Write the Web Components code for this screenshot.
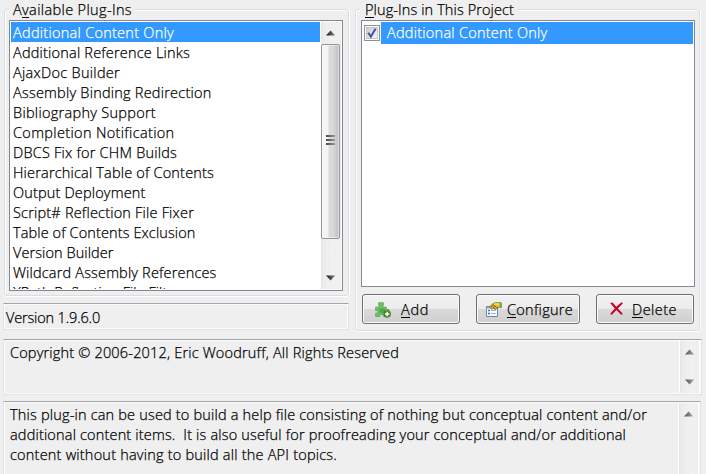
<!DOCTYPE html>
<html lang="en"><head><meta charset="utf-8"><title>Plug-Ins</title>
<style>
html,body{margin:0;background:#efefef;overflow:hidden}
body{width:706px;height:474px;font:350 14.5px/20px "Open Sans","Noto Sans",sans-serif;color:#000;-webkit-text-stroke:.25px}
</style></head><body>
<plugin-page></plugin-page>
<script>
const define=(name,html,init)=>customElements.define(name,class extends HTMLElement{
  connectedCallback(){
    if(this.shadowRoot)return;
    this.attachShadow({mode:'open'}).innerHTML=html;
    if(init)init.call(this,this.shadowRoot);
  }
});

// One line of text, spaced out to the advance width given in "w"
define('ui-text',`<style>:host{display:inline-block;white-space:pre;height:20px;line-height:20px;vertical-align:top}span{display:inline-block}</style><span><slot></slot></span>`,function(r){
  const s=r.querySelector('span'),w=+this.getAttribute('w');
  const n=this.textContent.length;
  if(w)s.style.letterSpacing=((w-s.getBoundingClientRect().width)/n).toFixed(4)+'px';
});

define('ui-group',`<style>
:host{display:block;box-sizing:border-box;border:1px solid #d5dfe5;border-radius:3px;box-shadow:inset 1px 1px #fff,0 1px #fff,1px 0 #fff;padding:0 4px}
.l{display:flex;margin-top:-10px;height:20px}
.l span{background:#efefef;display:flex;padding:0 3px 0 2px}
</style><div class="l"><span><slot name="legend"></slot></span></div><slot></slot>`);

define('ui-list',`<style>
:host{display:flex;box-sizing:border-box;border:1px solid #828790;background:#fff;padding:1px;overflow:hidden}
.rows{flex:1;min-width:0;overflow:hidden}
</style><div class="rows"><slot></slot></div><slot name="bar"></slot>`);

define('ui-item',`<style>
:host{display:block;box-sizing:border-box;height:20px;padding:1px 0 0 2px;overflow:hidden}
:host([selected]){background:#39f;color:#fff}
</style><slot></slot>`);

define('ui-check-item',`<style>
:host{display:flex;height:22px}
.c{box-sizing:border-box;width:16px;height:16px;margin:3px 1px 0 1px;border:1px solid #8e8f8f;background:#fff;padding:1px}
svg{display:block;width:12px;height:12px;background:linear-gradient(135deg,#c5cbd2,#f7f8f9);box-shadow:inset 0 0 0 1px #c0c5ca}
.t{flex:1;background:#39f;color:#fff;padding:1px 0 0 6px}
</style><div class="c"><svg viewBox="0 0 12 12"><path d="M2.3 5.8L4.8 9.7L9.6 1.8" fill="none" stroke="#3f529b" stroke-width="2"/></svg></div><div class="t"><slot></slot></div>`);

const arrow=(up,dim)=>`<svg width="10" height="6" viewBox="0 0 10 6"><defs><linearGradient id="g" x2="1"><stop stop-color="${dim?'#505050':'#101010'}"/><stop offset="1" stop-color="${dim?'#aaa':'#888'}"/></linearGradient></defs><path d="${up?'M0 5.5L4.6 .5L9.2 5.5Z':'M0 .5H9.2L4.6 5.5Z'}" fill="url(#g)"/></svg>`;
define('ui-scroll','',function(r){
  const dim=this.hasAttribute('dim'),thumb=this.hasAttribute('thumb');
  r.innerHTML=`<style>
:host{display:flex;flex-direction:column;box-sizing:border-box;width:20px;background:linear-gradient(90deg,#e3e3e3,#ececec 2px,#f1f1f1 60%,#eee);justify-content:space-between}
:host([dim]){box-shadow:-1px 0 #fff,inset -1px 0 #fff}
.a{height:22px;display:flex;align-items:center;padding-left:5px}
.a svg{display:block}
.th{box-sizing:border-box;width:19px;height:195px;border:1px solid #979797;border-radius:2px;background:linear-gradient(90deg,#f5f5f5 0 6px,#d9dadc 7px 11px,#c9cacd 14px,#bfc0c4);box-shadow:inset 0 0 0 1px #ffffff70;display:flex;flex-direction:column;align-items:center;justify-content:center;gap:2px;padding-bottom:4px}
.th i{width:9px;height:2px;background:linear-gradient(90deg,#444,#999)}
.f{flex:1}
</style><div class="a">${arrow(true,dim)}</div>${thumb?'<div class="th"><i></i><i></i><i></i></div>':''}<div class="f"></div>${this.hasAttribute('cut')?'':`<div class="a">${arrow(false,dim)}</div>`}`;
});

define('ui-field',`<style>
:host{display:flex;box-sizing:border-box;border:1px solid #dfe4ea;border-top-color:#a5a6a9;box-shadow:inset 0 0 0 1px #fafafa;padding:1px;background:#efefef;overflow:hidden}
.b{flex:1}
</style><div class="b"><slot></slot></div><slot name="bar"></slot>`);

define('ui-button',`<style>
:host{display:flex;box-sizing:border-box;height:30px;border:1px solid #707070;border-radius:3px;background:linear-gradient(#f2f2f2,#ebebeb 49%,#dadada 50%,#cfcfcf);box-shadow:inset 0 0 0 1px #fafafa;padding-top:5px}
slot[name=icon]{display:block}
</style><slot name="icon"></slot><slot></slot>`);

const icons={
add:`<path d="M.7 5.2H4.2V3.4H3.7V.8H8.3V3.4H7.8V5.2H11.3V7.6H14V11H11.3V14.4H8.6V12.6H4.8V14.4H.7V11.2H3V8.6H.7Z" fill="#6fbf69" stroke="#62ad62" stroke-linejoin="round"/><path d="M4 6.5H10V11H5Z" fill="#4ca94b"/><circle cx="12.2" cy="12" r="3.4" fill="#568b2c" stroke="#3d751e" stroke-width=".8"/><path d="M12.2 9.8V14.2M10 12H14.4" stroke="#fff" stroke-width="1.5"/>`,
config:`<path d="M.5 4.5H11.5V14.5H.5Z" fill="#f8fbff" stroke="#6e87a8"/><path d="M1 5H11V6.5H1Z" fill="#8eafe0"/><path d="M2 8.5H4M2 11.5H4" stroke="#3e70bd" stroke-width="1.4"/><path d="M5 8.5H10M5 11.5H10" stroke="#9cb5da" stroke-width="1.2"/><path d="M3.5 5L7 1.4L10 .7H14.5V5L11 5.6L9.5 8L7.5 6L5.5 7.5Z" fill="#e5b936" stroke="#81691c" stroke-width=".8"/><path d="M5 5.2L7.5 3L10.5 5.5M7 5L9 6.5" fill="none" stroke="#624d1b" stroke-width=".9"/><path d="M8 2H13" stroke="#fff08c"/><path d="M14 .5H16V6H14Z" fill="#72a755"/>`,
del:`<path d="M1.2 2L3.5 1.5L7.3 5.8L12.5 1.2L14 2.3L8.8 7.5L13.8 12.8L12.4 14L7.4 9.1L2.6 14L1.3 12.8L5.8 7.5Z" fill="#c90022"/>`};
define('ui-icon','<style>:host{display:block;width:16px;height:16px}svg{display:block}</style>',function(r){
  r.innerHTML+=`<svg width="16" height="16" viewBox="0 0 16 16">${icons[this.getAttribute('name')]}</svg>`;
});

const items=[['Additional Content Only',161],['Additional Reference Links',177],['AjaxDoc Builder',107],['Assembly Binding Redirection',198.5],['Bibliography Support',143],['Completion Notification',161.5],['DBCS Fix for CHM Builds',164],['Hierarchical Table of Contents',201],['Output Deployment',132.5],['Script# Reflection File Fixer',181],['Table of Contents Exclusion',182.5],['Version Builder',100.5],['Wildcard Assembly References',203.5],['XPath Reflection File Filter',168]];
define('plugin-page',`<style>
:host{display:block;width:706px;height:474px;padding:9px 0 0 3px;box-sizing:border-box}
u{text-decoration:none;box-shadow:0 -1px #000 inset;display:inline-block;line-height:17px;height:17px}
.cols{display:grid;grid-template-columns:346px 346px;column-gap:6px;height:330px}
.left ui-group{margin:0 0 0 1px;width:345px;height:287px}
.left ui-list{height:271px;width:334px}
.right ui-group{height:322px;width:345px}
.right ui-list{height:267px;width:334px;margin-left:1px}
.left ui-scroll{margin-left:1px}
.btns{display:grid;grid-template-columns:98px 104px 98px;column-gap:16px;margin:7px 0 0 2px}
.ver{height:27px;margin-top:7px}
.ver ui-text{margin:3px 0 0 1px}
.copy{width:699px;height:56px}
.desc{width:698px;height:90px;margin-top:6px}
.text{padding:2px 0 0 5px}
</style>
<div class="cols">
 <div class="left">
  <ui-group><ui-text slot="legend" w="119" style="margin-left:2px">A<u>v</u>ailable Plug-Ins</ui-text>
   <ui-list>${items.map(([t,w],i)=>`<ui-item ${i?'':'selected'}><ui-text w="${w}">${t}</ui-text></ui-item>`).join('')}<ui-scroll slot="bar" thumb></ui-scroll></ui-list>
  </ui-group>
  <ui-field class="ver"><ui-text w="94">Version 1.9.6.0</ui-text></ui-field>
 </div>
 <div class="right">
  <ui-group><ui-text slot="legend" w="149" style="margin-left:3px"><u>P</u>lug-Ins in This Project</ui-text>
   <ui-list><ui-check-item><ui-text w="160.5">Additional Content Only</ui-text></ui-check-item></ui-list>
   <div class="btns">
    <ui-button><ui-icon slot="icon" name="add" style="margin:2px 10px 0 12px"></ui-icon><ui-text w="28"><u>A</u>dd</ui-text></ui-button>
    <ui-button><ui-icon slot="icon" name="config" style="margin:2px 5px 0 9px"></ui-icon><ui-text w="66"><u>C</u>onfigure</ui-text></ui-button>
    <ui-button><ui-icon slot="icon" name="del" style="margin:1px 7px 0 12px"></ui-icon><ui-text w="45"><u>D</u>elete</ui-text></ui-button>
   </div>
  </ui-group>
 </div>
</div>
<ui-field class="copy"><div class="text"><ui-text w="389">Copyright © 2006-2012, Eric Woodruff, All Rights Reserved</ui-text></div><ui-scroll slot="bar" dim></ui-scroll></ui-field>
<ui-field class="desc"><div class="text"><ui-text w="637">This plug-in can be used to build a help file consisting of nothing but conceptual content and/or</ui-text><br><ui-text w="616">additional content items.  It is also useful for proofreading your conceptual and/or additional</ui-text><br><ui-text w="327">content without having to build all the API topics.</ui-text></div><ui-scroll slot="bar" dim cut></ui-scroll></ui-field>`);
</script>
</body></html>
